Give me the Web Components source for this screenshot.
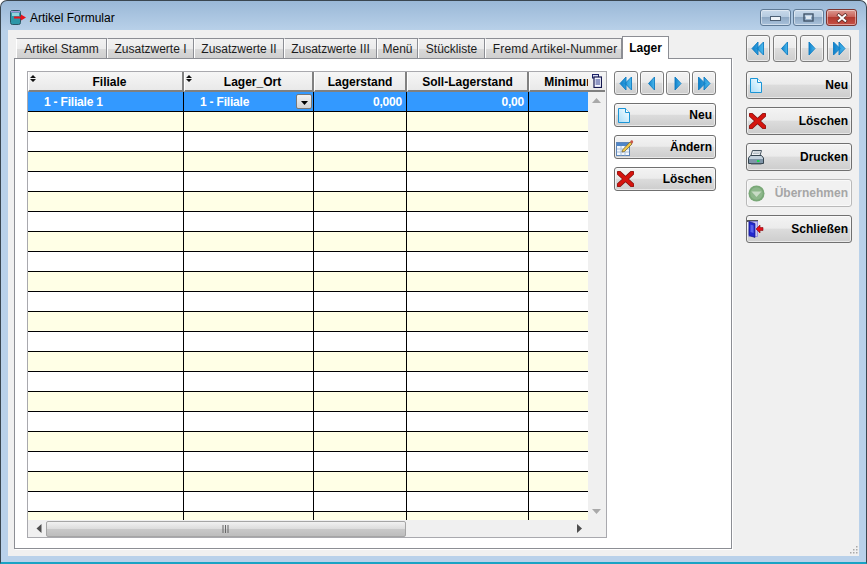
<!DOCTYPE html>
<html>
<head>
<meta charset="utf-8">
<title>Artikel Formular</title>
<style>
  html, body { margin:0; padding:0; background:#fff; }
  body { font:12px "Liberation Sans", Arial, sans-serif; color:#000; overflow:hidden; }
</style>
</head>
<body>
<app-window heading="Artikel Formular">
  <tab-panel slot="left">
    <grid-view></grid-view>
    <div slot="side" style="display:contents">
      <nav-buttons h="24" w="24" gap="2"></nav-buttons>
      <app-button h="24" icon="page" style="margin-top:8px">Neu</app-button>
      <app-button h="24" icon="edit" style="margin-top:8px">Ändern</app-button>
      <app-button h="24" icon="cross" style="margin-top:8px">Löschen</app-button>
    </div>
  </tab-panel>
  <div slot="right" style="display:contents">
    <nav-buttons h="27" w="24" gap="3"></nav-buttons>
    <app-button h="28" icon="page" style="margin-top:9px">Neu</app-button>
    <app-button h="28" icon="cross" style="margin-top:8px">Löschen</app-button>
    <app-button h="28" icon="print" style="margin-top:8px">Drucken</app-button>
    <app-button h="28" icon="apply" disabled style="margin-top:8px">Übernehmen</app-button>
    <app-button h="28" icon="exit" style="margin-top:8px">Schließen</app-button>
  </div>
</app-window>

<script>
const ICONS = {
  page: `<svg style="margin-left:1px" width="12" height="15" viewBox="0 0 12 15"><defs><linearGradient id="p" x1="0" y1="1" x2="1" y2="0"><stop offset="0" stop-color="#a9dcf7"/><stop offset=".55" stop-color="#d5f0fd"/><stop offset="1" stop-color="#fff"/></linearGradient></defs><path d="M.5 .5H7.5L11.5 4.5V14.5H.5Z" fill="url(#p)" stroke="#1b95d6"/><path d="M7.5 .5V4.5H11.5" fill="#fff" stroke="#1b95d6"/></svg>`,
  cross: `<svg width="17" height="16" viewBox="0 0 17 16"><path d="M2 2L15 14M15 2L2 14" stroke="#7a1210" stroke-width="4.8" stroke-linecap="round"/><path d="M2.2 2.2L14.8 13.8M14.8 2.2L2.2 13.8" stroke="#d5150f" stroke-width="3.6" stroke-linecap="round"/></svg>`,
  edit: `<svg style="margin-left:-1px" width="18" height="17" viewBox="0 0 18 17"><rect x=".5" y="3.5" width="13" height="13" fill="#f4f8fc" stroke="#5f86b8"/><path d="M1 4H13V7H1Z" fill="#4f86c8"/><path d="M1 10H13M1 13H13M5 7V16.5M9 7V16.5" stroke="#a9c0dc"/><path d="M6.5 11L14 3L16 5L8.5 12.5L6 13Z" fill="#f0c848" stroke="#6e5c2c" stroke-width=".7"/><path d="M14 2.8L15 1.6C15.5 1.1 16 1.1 16.5 1.6L17 2.2C17.4 2.7 17.3 3.2 16.8 3.7L16 5Z" fill="#c9584a"/></svg>`,
  print: `<svg style="margin-left:-1px" width="16" height="15" viewBox="0 0 16 15"><path d="M4.5 .5H13.5L12 5.5H3Z" fill="#f7f9fb" stroke="#44535f"/><path d="M5.5 2H12M5 3.6H11.5" stroke="#9aa7b3" stroke-width=".8"/><path d="M2.5 5.5H13.5L15.5 8V13.5H.5V8Z" fill="#c4d2de" stroke="#35444f"/><path d="M1 9H15V13H1Z" fill="#7f95a8"/><rect x="9" y="10" width="2.5" height="2" fill="#16e04c"/><path d="M3 13.5H13.5V14.5H3Z" fill="#56656f"/></svg>`,
  apply: `<svg style="margin-left:-1px" width="17" height="17" viewBox="0 0 17 17"><circle cx="8.5" cy="8.5" r="8" fill="#79a877"/><circle cx="8.5" cy="8.5" r="6.2" fill="#8db78b"/><path d="M3.5 6.5H13.5L8.5 12Z" fill="#c8dbc6"/></svg>`,
  exit: `<svg style="margin-left:-2px" width="17" height="18" viewBox="0 0 17 18"><path d="M0 1H11" stroke="#111" stroke-width="1.4"/><rect x="2" y="1.5" width="8.5" height="15" fill="#c8c4f6" stroke="#8a86e0" stroke-width=".8"/><path d="M2 1.5L8 3.5V17.5L2 15.5Z" fill="#2328d0" stroke="#12146e" stroke-width=".6"/><path d="M3.5 4.5L6.5 5.5V13L3.5 12Z" fill="#5a62ea"/><path d="M16 7.5H13V5L9 9L13 13V10.5H16Z" fill="#e0101a" stroke="#8a0a10" stroke-width=".6"/></svg>`
};

const ARROWS = {
  first: 'M8 2L2 8.5L8 15ZM13.5 2L7 8.5L13.5 15Z',
  prev: 'M10.5 2L4.5 8.5L10.5 15Z',
  next: 'M5 2L11 8.5L5 15Z',
  last: 'M2.5 2L9 8.5L2.5 15ZM8 2L14 8.5L8 15Z'
};

const BTN_BG = 'linear-gradient(#f3f3f3 0%, #ebebeb 47%, #dcdcdc 50%, #cdcdcd 100%)';

class AppWindow extends HTMLElement {
  constructor() {
    super();
    this.attachShadow({ mode: 'open' });
    this.shadowRoot.innerHTML = `
      <style>
        :host {
          display:flex; flex-direction:column; box-sizing:border-box;
          width:867px; height:564px; position:relative;
          border:1px solid #3a4650; border-bottom:2px solid #1aa3c4;
          border-radius:7px 7px 0 0;
          background:linear-gradient(#9ab8d7 0, #b9d1e9 30px, #b9d1ea 100%);
        }
        #title { display:flex; align-items:flex-start; height:29px; box-sizing:border-box; padding:9px 9px 0 9px; }
        #title span { margin-left:4px; margin-top:1px; font:12px "Liberation Sans", Arial, sans-serif; color:#000; flex:1; line-height:15px; }
        .ctl {
          box-sizing:border-box; width:31px; height:17px; margin-left:2px;
          border:1px solid #5f7a96; border-radius:3px;
          background:linear-gradient(#c8d9ea 0, #b6cbe0 45%, #8fa9c4 50%, #a9c2dc 100%);
          box-shadow:inset 0 0 0 1px rgba(255,255,255,.45);
          display:flex; align-items:center; justify-content:center;
        }
        .ctl.close { background:linear-gradient(#dc9a92 0, #c9625a 45%, #b23a30 50%, #c65046 100%); border-color:#7d3530; }
        #ctls { display:flex; margin-top:-1px; }
        #client {
          height:526px; margin:0 7px; display:flex; background:#f0f0f0;
          box-sizing:border-box; padding:0 0 0 6px;
        }
        #left { width:718px; padding-top:6px; }
        #right { width:106px; margin-left:14px; padding-top:5px; display:flex; flex-direction:column; }
        #grip { position:absolute; right:8px; bottom:7px; }
      </style>
      <div id="title">
        <svg width="16" height="15" viewBox="0 0 16 15"><rect x=".5" y=".5" width="10" height="14" rx="2" fill="#2d97a8" stroke="#2b5563"/><rect x="1" y="1" width="9" height="1.5" fill="#a49ad8"/><rect x="2" y="3" width="7" height="3" fill="#8fd3dc"/><path d="M4 6.5H11V4.5L16 7.5L11 10.5V8.5H4Z" fill="#e8121c"/></svg>
        <span></span>
        <div id="ctls">
          <div class="ctl"><svg width="11" height="7"><rect x=".5" y="2.5" width="10" height="4" fill="#eef3f8" stroke="#4c5f74"/></svg></div>
          <div class="ctl"><svg width="11" height="9"><rect x="1" y="1" width="9" height="7" fill="none" stroke="#40546a" stroke-width="1.4"/><rect x="3" y="3" width="5" height="3" fill="#dfe9f2"/></svg></div>
          <div class="ctl close"><svg width="14" height="10"><path d="M2.5 1L11.5 9M11.5 1L2.5 9" stroke="#5a2a26" stroke-width="3.4"/><path d="M3 1.5L11 8.5M11 1.5L3 8.5" stroke="#fff" stroke-width="2"/></svg></div>
        </div>
      </div>
      <div id="client">
        <div id="left"><slot name="left"></slot></div>
        <div id="right"><slot name="right"></slot></div>
      </div>
      <svg id="grip" width="9" height="9"><g fill="#a8a8a8"><rect x="7" y="0" width="1.5" height="1.5"/><rect x="4" y="3" width="1.5" height="1.5"/><rect x="7" y="3" width="1.5" height="1.5"/><rect x="1" y="6" width="1.5" height="1.5"/><rect x="4" y="6" width="1.5" height="1.5"/><rect x="7" y="6" width="1.5" height="1.5"/></g></svg>
    `;
    this.shadowRoot.querySelector('#title span').textContent = this.getAttribute('heading');
  }
}

class TabPanel extends HTMLElement {
  constructor() {
    super();
    this.attachShadow({ mode: 'open' });
    const tabs = [['Artikel Stamm',91],['Zusatzwerte I',87],['Zusatzwerte II',90],['Zusatzwerte III',93],['Menü',41],['Stückliste',67],['Fremd Artikel-Nummer',137]];
    this.shadowRoot.innerHTML = `
      <style>
        :host { display:block; }
        #strip { display:flex; align-items:flex-end; height:23px; padding-left:2px; margin-bottom:-1px; position:relative; z-index:1; }
        .tab {
          box-sizing:border-box; height:20px; margin-bottom:1px; text-align:center; line-height:21px;
          border:1px solid #8c8e94; border-bottom:none; border-left-color:#fff;
          background:linear-gradient(#f2f2f2, #ebebeb 50%, #dadada 50%, #cfcfcf);
          color:#1c1c1c; white-space:nowrap; font-size:12px;
        }
        .tab.wide { letter-spacing:.2px; padding-left:3px; }
        .tab.on {
          height:23px; margin-bottom:0; width:47px; background:#fff; font-weight:bold; color:#000;
          border:1px solid #8c8e94; border-bottom:none; line-height:23px;
        }
        #panel {
          box-sizing:border-box; width:718px; height:491px; padding:12px; background:#fff;
          border:1px solid #8c8e94; box-shadow:1px 1px 0 #fff; display:flex; gap:7px;
        }
        #side { width:102px; display:flex; flex-direction:column; }
      </style>
      <div id="strip">
        ${tabs.map(t => `<div class="tab${t[1] > 100 ? ' wide' : ''}" style="width:${t[1]}px">${t[0]}</div>`).join('')}
        <div class="tab on">Lager</div>
      </div>
      <div id="panel">
        <slot></slot>
        <div id="side"><slot name="side"></slot></div>
      </div>
    `;
  }
}

class NavButtons extends HTMLElement {
  constructor() {
    super();
    this.attachShadow({ mode: 'open' });
    const h = this.getAttribute('h'), w = this.getAttribute('w'), gap = this.getAttribute('gap');
    this.shadowRoot.innerHTML = `
      <style>
        :host { display:flex; gap:${gap}px; }
        div {
          box-sizing:border-box; width:${w}px; height:${h}px; border:1px solid #7c7c7c; border-radius:3px;
          background:${BTN_BG}; box-shadow:inset 0 0 0 1px rgba(255,255,255,.55);
          display:flex; align-items:center; justify-content:center;
        }
      </style>
      ${Object.values(ARROWS).map(d => `<div><svg width="16" height="17" viewBox="0 0 16 17"><defs><linearGradient id="b" x1="0" y1="0" x2="1" y2="0"><stop offset="0" stop-color="#0f80cb"/><stop offset="1" stop-color="#4ab8ec"/></linearGradient></defs><path d="${d}" fill="url(#b)" stroke="#0f7cc2" stroke-width=".9"/></svg></div>`).join('')}
    `;
  }
}

class AppButton extends HTMLElement {
  constructor() {
    super();
    this.attachShadow({ mode: 'open' });
    const off = this.hasAttribute('disabled');
    this.shadowRoot.innerHTML = `
      <style>
        :host {
          display:flex; align-items:center; justify-content:space-between; box-sizing:border-box;
          height:${this.getAttribute('h')}px; padding:0 3px 0 2px;
          border:1px solid ${off ? '#b9b9b9' : '#707070'}; border-radius:3px;
          background:${off ? '#f1f1f1' : BTN_BG};
          box-shadow:inset 0 0 0 1px rgba(255,255,255,.55);
          font:bold 12px "Liberation Sans", Arial, sans-serif; color:${off ? '#a6a6a6' : '#000'};
        }
        i { display:flex; font-style:normal; }
        svg { display:block; }
      </style>
      <i>${ICONS[this.getAttribute('icon')]}</i>
      <span><slot></slot></span>
    `;
  }
}

class GridView extends HTMLElement {
  constructor() {
    super();
    this.attachShadow({ mode: 'open' });
    const cols = [156, 130, 93, 122, 84];
    const heads = ['Filiale', 'Lager_Ort', 'Lagerstand', 'Soll-Lagerstand', 'Minimum'];
    const sort = `<svg class="sort" width="6" height="7"><path d="M3 0L6 3H0ZM3 7L0 4H6Z" fill="#111"/></svg>`;
    const drop = `<span class="drop"><svg width="9" height="5"><path d="M1 0H8L4.5 4Z" fill="#000"/></svg></span>`;
    let rows = `<div class="row sel">
      <div class="c" style="padding-left:16px">1 - Filiale 1</div>
      <div class="c" style="padding-left:16px;justify-content:space-between"><span>1 - Filiale</span>${drop}</div>
      <div class="c r">0,000</div><div class="c r">0,00</div><div class="c"></div></div>`;
    for (let i = 0; i < 21; i++) {
      rows += `<div class="row ${i % 2 ? '' : 'alt'}">${cols.map(() => '<div class="c"></div>').join('')}</div>`;
    }
    this.shadowRoot.innerHTML = `
      <style>
        :host {
          display:grid; grid-template-columns:560px 18px; grid-template-rows:20px 428px 17px;
          width:580px; height:467px; box-sizing:border-box; border:1px solid #a9a9ae; background:#f0f0f0;
          flex:none; font:12px "Liberation Sans", Arial, sans-serif;
        }
        .clip { overflow:hidden; }
        .head, .row { display:grid; grid-template-columns:${cols.map(c => c + 'px').join(' ')}; width:585px; }
        .head > div {
          box-sizing:border-box; height:20px; position:relative; text-align:center; line-height:21px; font-weight:bold;
          border-right:2px solid #808080; border-bottom:2px solid #808080; background:linear-gradient(#f6f6f6, #e9e9e9);
          border-left:1px solid #fff; white-space:nowrap;
        }
        .head > div.s { padding-left:8px; }
        .sort { position:absolute; left:1px; top:3px; }
        .row { height:20px; background:#fff; }
        .row.alt { background:#ffffe6; }
        .row.sel { background:#3399ff; color:#fff; font-weight:bold; }
        .row.sel span, .row.sel .c { letter-spacing:-.2px; }
        .c { box-sizing:border-box; height:20px; border-right:1px solid #000; border-bottom:1px solid #000; display:flex; align-items:center; white-space:nowrap; }
        .c:last-child { border-right:none; }
        .c.r { justify-content:flex-end; padding-right:4px; }
        .drop {
          box-sizing:border-box; width:16px; height:15px; margin-right:1px; border:1px solid #777; border-radius:2px;
          background:linear-gradient(#f2f2f2, #d2d2d2); display:flex; align-items:center; justify-content:center; padding-top:4px;
        }
        .drop svg { display:block; }
        #chooser { display:flex; align-items:center; justify-content:center; background:linear-gradient(#f6f6f6, #e9e9e9); border-bottom:2px solid #808080; box-sizing:border-box; width:17px; height:20px; }
        #vbar { display:flex; flex-direction:column; justify-content:space-between; align-items:center; padding:6px 1px 6px 0; box-sizing:border-box; background:#f0f0f0; }
        #hbar { display:flex; align-items:center; background:#f0f0f0; box-sizing:border-box; height:17px; }
        #hbar .la { margin-left:5px; margin-right:1px; width:12px; }
        #thumb {
          box-sizing:border-box; width:360px; height:16px; border:1px solid #a5a5a5; border-radius:2px;
          background:linear-gradient(#f1f1f1, #dcdcdc 50%, #c9c9c9 50%, #bdbdbd);
          display:flex; align-items:center; justify-content:center;
        }
        #hbar .ra { margin-left:auto; margin-right:6px; }
        svg { display:block; }
      </style>
      <div class="clip"><div class="head">
        ${heads.map((h, i) => `<div class="${i < 2 ? 's' : ''}">${i < 2 ? sort : ''}${h}</div>`).join('')}
      </div></div>
      <div id="chooser"><svg width="10" height="14" viewBox="0 0 10 14"><rect x=".5" y=".5" width="6" height="3.5" fill="#d9dcf2" stroke="#1a1f66"/><rect x="2" y="3" width="7.5" height="10.5" fill="#f4f6ff" stroke="#14184f" stroke-width="1.2"/><path d="M3.5 6H8M3.5 8H8M3.5 10H8" stroke="#2d3a8a"/></svg></div>
      <div class="clip">${rows}</div>
      <div id="vbar">
        <svg width="9" height="5"><path d="M4.5 0L9 5H0Z" fill="#a9a9a9"/></svg>
        <svg width="9" height="5"><path d="M0 0H9L4.5 5Z" fill="#a9a9a9"/></svg>
      </div>
      <div id="hbar">
        <svg class="la" width="5" height="9" viewBox="0 0 5 9"><path d="M5 0V9L0 4.5Z" fill="#4d4d4d"/></svg>
        <div id="thumb"><svg width="8" height="8"><path d="M1 0V8M3.5 0V8M6 0V8" stroke="#666" stroke-width="1"/></svg></div>
        <svg class="ra" width="5" height="9" viewBox="0 0 5 9"><path d="M0 0V9L5 4.5Z" fill="#4d4d4d"/></svg>
      </div>
      <div></div>
    `;
  }
}

customElements.define('app-window', AppWindow);
customElements.define('tab-panel', TabPanel);
customElements.define('nav-buttons', NavButtons);
customElements.define('app-button', AppButton);
customElements.define('grid-view', GridView);
</script>
</body>
</html>
